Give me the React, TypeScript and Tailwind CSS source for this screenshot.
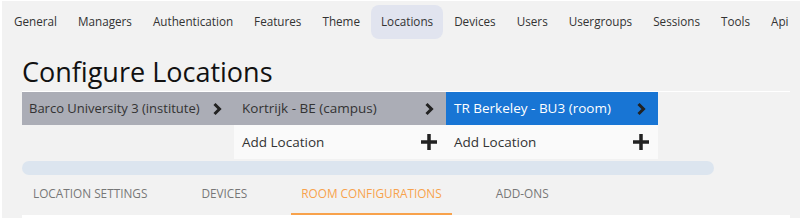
const NAV = [
  "General",
  "Managers",
  "Authentication",
  "Features",
  "Theme",
  "Locations",
  "Devices",
  "Users",
  "Usergroups",
  "Sessions",
  "Tools",
  "Api",
];

const TABS = ["Location Settings", "Devices", "Room Configurations", "Add-ons"];

function Chevron() {
  return (
    <svg width="10" height="14" viewBox="0 0 10 14" className="shrink-0">
      <polyline
        points="2.5,2 7.5,7 2.5,12"
        fill="none"
        stroke="#222"
        strokeWidth="3"
        strokeLinejoin="miter"
      />
    </svg>
  );
}

function Plus() {
  return (
    <svg width="18" height="18" viewBox="0 0 18 18" className="shrink-0">
      <path d="M9 1v16M1 9h16" stroke="#222" strokeWidth="3.5" />
    </svg>
  );
}

export default function App() {
  return (
    <div
      className="h-screen overflow-hidden bg-[#f2f2f2] border-l-2 border-t border-white text-[#222]"
      style={{ fontFamily: '"Open Sans", "Noto Sans", sans-serif' }}
    >
      <nav className="flex items-center gap-px pl-[2px] pt-[4px]">
        {NAV.map((item) => (
          <div
            key={item}
            className={`h-[34px] px-[10px] flex items-center rounded-lg text-[11.7px] text-[#333] whitespace-nowrap ${
              item === "Locations" ? "bg-[#e1e4ef]" : ""
            }`}
          >
            {item}
          </div>
        ))}
      </nav>

      <div className="pl-[20px] pr-[10px]">
        <h1 className="text-[27px] leading-[34px] pt-[16px] pb-[2px] text-[#111]">
          Configure Locations
        </h1>

        <div className="flex h-[34px] border-t border-white">
          <div className="w-[212px] bg-[#abadb6] flex items-center justify-between pl-[7px] pr-[12px] text-[13px] text-[#333] whitespace-nowrap">
            <span>Barco University 3 (institute)</span>
            <Chevron />
          </div>
          <div className="w-[212px] bg-[#abadb6] flex items-center justify-between pl-[8px] pr-[12px] text-[13.5px] text-[#333] whitespace-nowrap">
            <span>Kortrijk - BE (campus)</span>
            <Chevron />
          </div>
          <div className="w-[212px] bg-[#1875d4] flex items-center justify-between pl-[8px] pr-[12px] text-[13.5px] text-white whitespace-nowrap">
            <span>TR Berkeley - BU3 (room)</span>
            <Chevron />
          </div>
        </div>

        <div className="flex h-[34px]">
          <div className="w-[212px]" />
          <div className="w-[212px] bg-[#fafafa] flex items-center justify-between pl-[8px] pr-[8px] text-[13.5px] text-[#333]">
            <span>Add Location</span>
            <Plus />
          </div>
          <div className="w-[212px] bg-[#fafafa] flex items-center justify-between pl-[8px] pr-[8px] text-[13.5px] text-[#333]">
            <span>Add Location</span>
            <Plus />
          </div>
        </div>

        <div className="mt-[2px] h-[14px] w-[692px] rounded-full bg-[#dce5ef]" />

        <div className="flex gap-[34px] pl-[1px] h-[40px]">
          {TABS.map((tab) => (
            <div
              key={tab}
              className={`px-[10px] flex items-center uppercase text-[11.8px] border-b-2 whitespace-nowrap ${
                tab === "Room Configurations"
                  ? "text-[#f8a24c] border-[#f8a24c]"
                  : "text-[#777] border-transparent"
              }`}
            >
              {tab}
            </div>
          ))}
        </div>
        <div className="bg-white h-[40px]" />
      </div>
    </div>
  );
}
